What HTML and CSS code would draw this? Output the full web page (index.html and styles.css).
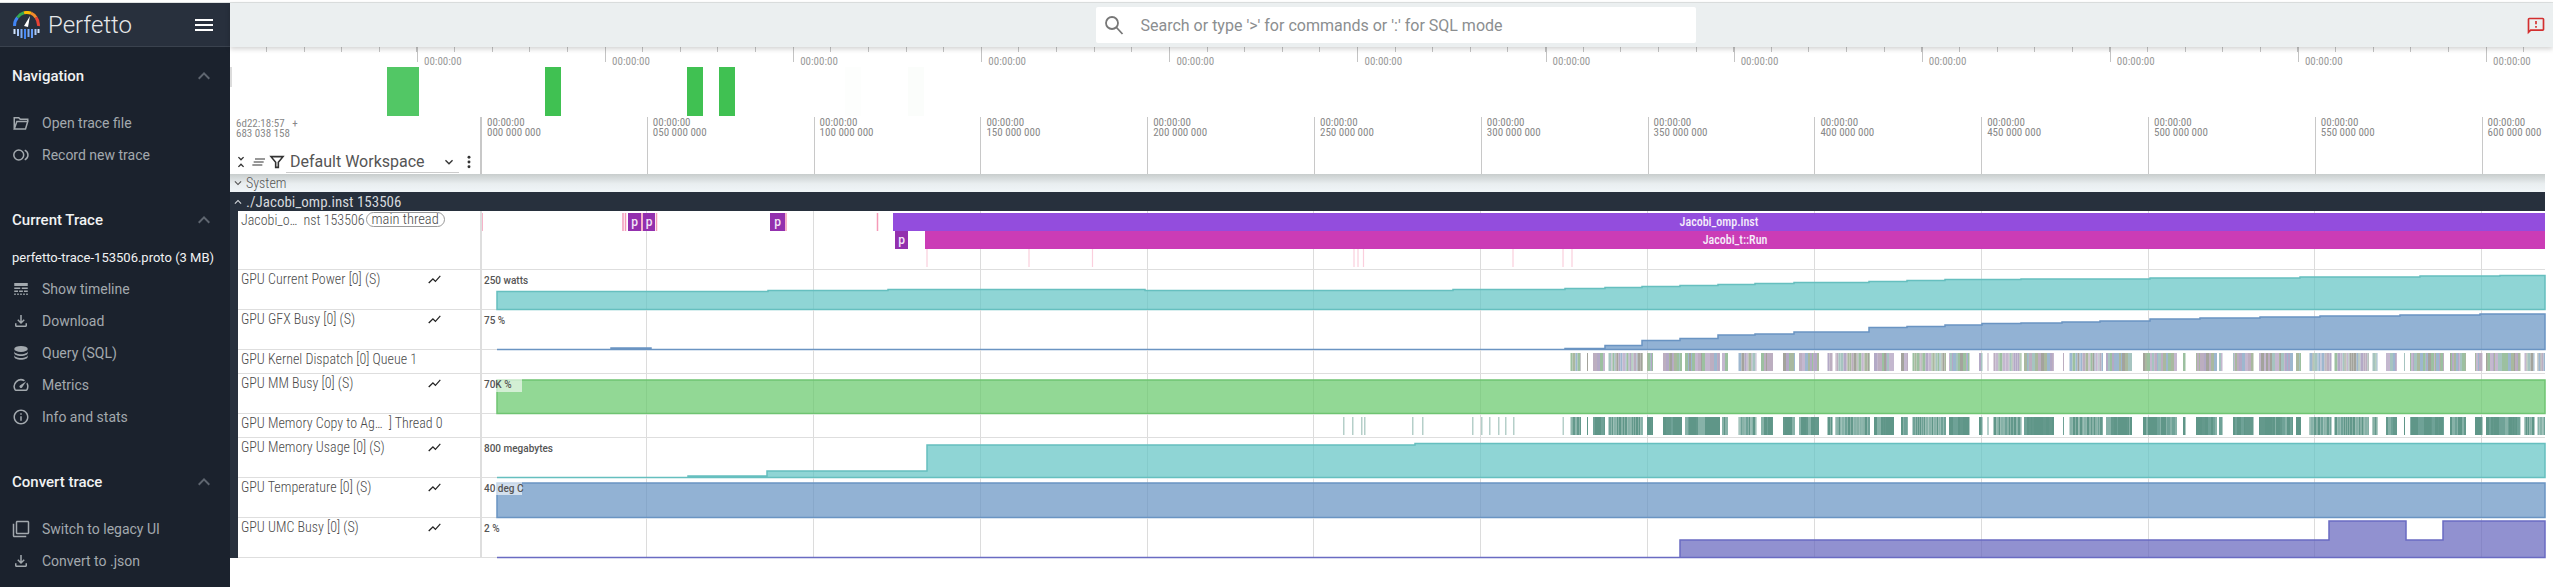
FILE: index.html
```html
<!DOCTYPE html>
<html>
<head>
    <meta charset="utf-8" />
    <title>Perfetto</title>
    <link rel="stylesheet" href="styles.css">
</head>
<body>
    <svg class="Defs">
        <symbol id="i-chart" viewBox="0 0 24 24"><path d="M3.5 18.49l6-6.01 4 4L22 6.92l-1.41-1.41-7.09 7.97-4-4L2 16.99z" /></symbol>
        <symbol id="i-up" viewBox="0 0 24 24"><path d="M12 8l-6 6 1.41 1.41L12 10.83l4.59 4.58L18 14z" /></symbol>
        <symbol id="i-down" viewBox="0 0 24 24"><path d="M16.59 8.59L12 13.17 7.41 8.59 6 10l6 6 6-6z" /></symbol>
        <symbol id="i-save" viewBox="0 0 24 24"><path d="M18 15v3H6v-3H4v3c0 1.1.9 2 2 2h12c1.1 0 2-.9 2-2v-3h-2zm-1-4l-1.41-1.41L13 12.17V4h-2v8.17L8.41 9.59 7 11l5 5 5-5z" /></symbol>
    </svg>
    <div class="Strip"></div>
    <div class="App">
        <nav class="Sidebar">
            <div class="Brand">
                <svg class="Logo" viewBox="0 0 27 28">
                    <g fill="none" stroke-width="3">
                        <path d="M1.6 15A12 12 0 0 1 4.5 6.5" stroke="#4285f4" />
                        <path d="M4.5 6.5A12 12 0 0 1 11 1.8" stroke="#34a853" />
                        <path d="M11 1.8A12 12 0 0 1 18 2.2" stroke="#fbbc04" />
                        <path d="M18 2.2A12 12 0 0 1 23 6.5" stroke="#f28b2c" />
                        <path d="M23 6.5A12 12 0 0 1 25.4 15" stroke="#ea4335" />
                    </g>
                    <path d="M11 15l6-10-2 11z" fill="#fff" />
                    <g fill="#4285f4">
                        <rect x="0.5" y="18" width="2" height="5" fill="#d2e3fc" />
                        <rect x="4" y="18" width="2" height="7" fill="#a8c7fa" />
                        <rect x="7.5" y="18" width="2" height="9" fill="#7baaf7" />
                        <rect x="11" y="18" width="2" height="10" />
                        <rect x="14.5" y="18" width="2" height="8" fill="#7baaf7" />
                        <rect x="18" y="18" width="2" height="9" fill="#669df6" />
                        <rect x="21.5" y="18" width="2" height="6" fill="#a8c7fa" />
                        <rect x="24.5" y="18" width="2" height="4" fill="#d2e3fc" />
                    </g>
                </svg>
                <span class="BrandName">Perfetto</span>
                <div class="Burger"><i></i><i></i><i></i></div>
            </div>

            <section class="NavSection">
                <h2 class="NavTitle">Navigation <svg class="NavChevron"><use href="#i-up" /></svg></h2>
                <ul class="NavList">
                    <li class="NavItem">
                        <svg class="NavIcon NavIconLine" viewBox="0 0 24 24" stroke-width="2"><path d="M3 20V5h6l2 2h10v3M3 20h15l3-10H6.5z" /></svg>
                        Open trace file
                    </li>
                    <li class="NavItem">
                        <svg class="NavIcon NavIconLine" viewBox="0 0 24 24" stroke-width="2"><circle cx="9" cy="12" r="6.6" /><path d="M17 5.5c2.5 1.2 4.3 3.6 4.3 6.5s-1.8 5.300-4.300 6.500" /></svg>
                        Record new trace
                    </li>
                </ul>
            </section>

            <section class="NavSection">
                <h2 class="NavTitle">Current Trace <svg class="NavChevron"><use href="#i-up" /></svg></h2>
                <ul class="NavList NavListTight">
                    <li class="NavItem TraceName">perfetto-trace-153506.proto (3 MB)</li>
                    <li class="NavItem">
                        <svg class="NavIcon" viewBox="0 0 24 24"><path d="M3 16h5v-2H3v2zm6.500 0h5v-2h-5v2zm6.500 0h5v-2h-5v2zM3 20h2v-2H3v2zm4 0h2v-2H7v2zm4 0h2v-2h-2v2zm4 0h2v-2h-2v2zm4 0h2v-2h-2v2zM3 12h8v-2H3v2zm10 0h8v-2h-8v2zM3 4v4h18V4H3z" /></svg>
                        Show timeline
                    </li>
                    <li class="NavItem"><svg class="NavIcon"><use href="#i-save" /></svg>Download</li>
                    <li class="NavItem">
                        <svg class="NavIcon" viewBox="0 0 24 24"><ellipse cx="12" cy="6.500" rx="9" ry="4" /><path d="M3 9.500c0 2.200 4 4 9 4s9-1.800 9-4V12c0 2.200-4 4-9 4s-9-1.800-9-4zM3 14.500c0 2.200 4 4 9 4s9-1.800 9-4V17c0 2.200-4 4-9 4s-9-1.800-9-4z" /></svg>
                        Query (SQL)
                    </li>
                    <li class="NavItem">
                        <svg class="NavIcon" viewBox="0 0 24 24"><path d="M20.380 8.570l-1.230 1.850a8 8 0 0 1-.22 7.580H5.070A8 8 0 0 1 15.580 6.850l1.850-1.230A10 10 0 0 0 3.350 19a2 2 0 0 0 1.720 1h13.850a2 2 0 0 0 1.740-1 10 10 0 0 0-.27-10.440zm-9.790 6.840a2 2 0 0 0 2.830 0l5.660-8.490-8.490 5.660a2 2 0 0 0 0 2.830z" /></svg>
                        Metrics
                    </li>
                    <li class="NavItem">
                        <svg class="NavIcon" viewBox="0 0 24 24"><path d="M11 7h2v2h-2zm0 4h2v6h-2zm1-9C6.480 2 2 6.480 2 12s4.480 10 10 10 10-4.480 10-10S17.520 2 12 2zm0 18c-4.410 0-8-3.590-8-8s3.590-8 8-8 8 3.590 8 8-3.590 8-8 8z" /></svg>
                        Info and stats
                    </li>
                </ul>
            </section>

            <section class="NavSection">
                <h2 class="NavTitle">Convert trace <svg class="NavChevron"><use href="#i-up" /></svg></h2>
                <ul class="NavList">
                    <li class="NavItem">
                        <svg class="NavIcon" viewBox="0 0 24 24"><path d="M3 5H1v16c0 1.100.9 2 2 2h16v-2H3V5zm18-4H7c-1.100 0-2 .9-2 2v14c0 1.100.9 2 2 2h14c1.100 0 2-.9 2-2V3c0-1.100-.9-2-2-2zm0 16H7V3h14v14z" /></svg>
                        Switch to legacy UI
                    </li>
                    <li class="NavItem"><svg class="NavIcon"><use href="#i-save" /></svg>Convert to .json</li>
                </ul>
            </section>
        </nav>

        <main class="Main">
            <header class="Topbar">
                <div class="Search">
                    <svg class="SearchIcon" viewBox="0 0 20 20" fill="none" stroke="#777" stroke-width="1.800"><circle cx="8" cy="8" r="6" /><path d="M12.500 12.500l6 6.500" /></svg>
                    <span class="SearchText">Search or type '&gt;' for commands or ':' for SQL mode</span>
                </div>
                <svg class="Feedback" viewBox="0 0 24 24"><path d="M20 2H4c-1.100 0-2 .9-2 2v18l4-4h14c1.100 0 2-.9 2-2V4c0-1.100-.9-2-2-2zm0 14H5.170L4 17.170V4h16v12zM11 12h2v2h-2zm0-6h2v4h-2z" /></svg>
            </header>

            <div class="Overview">
                <div class="Ruler">
                    <span class="RulerMark">00:00:00</span><span class="RulerMark">00:00:00</span><span class="RulerMark">00:00:00</span><span class="RulerMark">00:00:00</span><span class="RulerMark">00:00:00</span><span class="RulerMark">00:00:00</span><span class="RulerMark">00:00:00</span><span class="RulerMark">00:00:00</span><span class="RulerMark">00:00:00</span><span class="RulerMark">00:00:00</span><span class="RulerMark">00:00:00</span><span class="RulerMark">00:00:00</span>
                </div>
                <svg class="OverviewLane" viewBox="230 62 2323 55">
                    <rect x="230" y="67" width="2" height="20" fill="#dcdcdc" />
                    <rect x="387" y="67" width="32" height="49" fill="#52c765" />
                    <rect x="545" y="67" width="16" height="49" fill="#40c152" />
                    <rect x="687" y="67" width="16" height="49" fill="#40c152" />
                    <rect x="719" y="67" width="16" height="49" fill="#40c152" />
                    <rect x="845" y="67" width="16" height="49" fill="#fdfefd" />
                    <rect x="908" y="67" width="16" height="49" fill="#fbfdfb" />
                </svg>
            </div>

            <div class="TimeHeader">
                <div class="HeaderLeft">
                    <div class="Offset">6d22:18:57   +<br>683 038 158</div>
                    <div class="Tools">
                        <svg class="Tool ToolNarrow" viewBox="0 0 24 24"><path d="M7.410 18.590L8.830 20 12 16.830 15.170 20l1.410-1.410L12 14l-4.590 4.590zm9.180-13.180L15.170 4 12 7.170 8.830 4 7.410 5.410 12 10l4.590-4.590z" /></svg>
                        <svg class="Tool ToolLine" viewBox="0 0 24 24" stroke-width="1.800"><path d="M6 7.500h15M4 12h15M2 16.500h15" /></svg>
                        <svg class="Tool ToolLine" viewBox="0 0 24 24" stroke-width="2.400"><path d="M3 4h18l-7 8.500V20h-4v-7.500z" /></svg>
                        <div class="Workspace">
                            <span class="WorkspaceName">Default Workspace</span>
                            <svg class="Tool"><use href="#i-down" /></svg>
                        </div>
                        <svg class="Tool ToolMore" viewBox="0 0 24 24"><circle cx="12" cy="5" r="2.200" /><circle cx="12" cy="12" r="2.200" /><circle cx="12" cy="19" r="2.200" /></svg>
                    </div>
                </div>
                <div class="Scale">
                    <div class="ScaleMark">00:00:00<br>000 000 000</div>
                    <div class="ScaleMark">00:00:00<br>050 000 000</div>
                    <div class="ScaleMark">00:00:00<br>100 000 000</div>
                    <div class="ScaleMark">00:00:00<br>150 000 000</div>
                    <div class="ScaleMark">00:00:00<br>200 000 000</div>
                    <div class="ScaleMark">00:00:00<br>250 000 000</div>
                    <div class="ScaleMark">00:00:00<br>300 000 000</div>
                    <div class="ScaleMark">00:00:00<br>350 000 000</div>
                    <div class="ScaleMark">00:00:00<br>400 000 000</div>
                    <div class="ScaleMark">00:00:00<br>450 000 000</div>
                    <div class="ScaleMark">00:00:00<br>500 000 000</div>
                    <div class="ScaleMark">00:00:00<br>550 000 000</div>
                    <div class="ScaleMark">00:00:00<br>600 000 000</div>
                </div>
            </div>

            <div class="Tracks">
                <div class="GroupSystem">
                    <svg class="GroupChevron"><use href="#i-down" /></svg>System
                </div>
                <div class="GroupOpen">
                    <svg class="GroupChevron"><use href="#i-up" /></svg>./Jacobi_omp.inst 153506
                </div>
                <div class="GroupBody">
                    <div class="Row RowThread">
                        <div class="Shell"><span class="Title">Jacobi_o…</span><span class="Title TitleTail">nst 153506</span><span class="Pill">main thread</span></div>
                        <div class="Content">
                            <svg class="Chart" viewBox="482 211 2063 58">
                                <rect x="893" y="213" width="1652" height="18" fill="#934ddd" />
                                <rect x="925" y="231" width="1620" height="18" fill="#cb3cb6" />
                                <rect x="628" y="213" width="13" height="18" fill="#9330ae" />
                                <rect x="643" y="213" width="12" height="18" fill="#9330ae" />
                                <rect x="770" y="213" width="15" height="18" fill="#9330ae" />
                                <rect x="895" y="231" width="13" height="18" fill="#9330ae" />
                                <path class="PinkMark" d="M482 213v18M623 213v18M625.500 213v18M642 213v18M656.500 213v18M786 213v18M877.500 213v18" />
                                <path class="PaleMark" d="M927 249v18M1029 249v18M1092.500 249v18M1354 249v18M1358 249v18M1363.500 249v18M1513 249v18M1563 249v18M1572 249v18" />
                                <text class="SliceP" x="634.500" y="226">p</text>
                                <text class="SliceP" x="649" y="226">p</text>
                                <text class="SliceP" x="777.500" y="226">p</text>
                                <text class="SliceP" x="901.500" y="244">p</text>
                                <text class="SliceName" x="1719" y="226">Jacobi_omp.inst</text>
                                <text class="SliceName" x="1735" y="244">Jacobi_t::Run</text>
                            </svg>
                        </div>
                    </div>

                    <div class="Row">
                        <div class="Shell"><span class="Title">GPU Current Power [0] (S)</span><svg class="ChartIcon"><use href="#i-chart" /></svg></div>
                        <div class="Content">
                            <svg class="Chart" viewBox="482 270 2063 39">
                                <path class="Area Teal" d="M497 309.500V291.500H768V290.500H888V289.500H1145V290.500H1453V289.500H1565V288.500H1605V287.500H1642V286.500H1680V285.500H1718V284.500H1755V283.500H1794V282.500H1869V281.500H1907V280.500H1945V279.500H2021V279H2150V278H2300V277H2420V276H2500V275.500H2545V309.500z" />
                                <text class="Unit" x="484" y="284">250 watts</text>
                            </svg>
                        </div>
                    </div>

                    <div class="Row">
                        <div class="Shell"><span class="Title">GPU GFX Busy [0] (S)</span><svg class="ChartIcon"><use href="#i-chart" /></svg></div>
                        <div class="Content">
                            <svg class="Chart" viewBox="482 310 2063 39">
                                <path class="Area Blue" d="M497 349.500V349.500H611V348H651V349.500H1565V348.500H1605V345.500H1642V340.500H1680V338.500H1718V335H1755V334H1794V332H1869V327.500H1907V326.500H1945V325H1982V323.500H2021V323H2062V322H2100V321H2150V319H2200V318H2260V317H2320V316H2400V315H2480V314H2545V349.500z" />
                                <text class="Unit" x="484" y="324">75 %</text>
                            </svg>
                        </div>
                    </div>

                    <div class="Row RowSlim">
                        <div class="Shell"><span class="Title">GPU Kernel Dispatch [0] Queue 1</span></div>
                        <div class="Content"><svg class="Chart" id="kernel" viewBox="482 350 2063 23"></svg></div>
                    </div>

                    <div class="Row">
                        <div class="Shell"><span class="Title">GPU MM Busy [0] (S)</span><svg class="ChartIcon"><use href="#i-chart" /></svg></div>
                        <div class="Content">
                            <svg class="Chart" viewBox="482 374 2063 39">
                                <path class="Area Green" d="M497 413.500V380H2545V413.500z" />
                                <rect class="UnitMask" x="480" y="379" width="42" height="13" />
                                <text class="Unit" x="484" y="388">70K %</text>
                            </svg>
                        </div>
                    </div>

                    <div class="Row RowSlim">
                        <div class="Shell"><span class="Title">GPU Memory Copy to Ag…</span><span class="Title TitleTail">] Thread 0</span></div>
                        <div class="Content"><svg class="Chart" id="copy" viewBox="482 414 2063 23"></svg></div>
                    </div>

                    <div class="Row">
                        <div class="Shell"><span class="Title">GPU Memory Usage [0] (S)</span><svg class="ChartIcon"><use href="#i-chart" /></svg></div>
                        <div class="Content">
                            <svg class="Chart" viewBox="482 438 2063 39">
                                <path class="Area Teal" d="M497 477.500H688V476H767V471H927V445H1415V443.500H2545V477.500z" />
                                <text class="Unit" x="484" y="452">800 megabytes</text>
                            </svg>
                        </div>
                    </div>

                    <div class="Row">
                        <div class="Shell"><span class="Title">GPU Temperature [0] (S)</span><svg class="ChartIcon"><use href="#i-chart" /></svg></div>
                        <div class="Content">
                            <svg class="Chart" viewBox="482 478 2063 39">
                                <path class="Area Blue" d="M497 517.500V483H2545V517.500z" />
                                <rect class="UnitMask" x="480" y="482" width="42" height="13" />
                                <text class="Unit" x="484" y="492">40 deg C</text>
                            </svg>
                        </div>
                    </div>

                    <div class="Row">
                        <div class="Shell"><span class="Title">GPU UMC Busy [0] (S)</span><svg class="ChartIcon"><use href="#i-chart" /></svg></div>
                        <div class="Content">
                            <svg class="Chart" viewBox="482 518 2063 39">
                                <path class="Area Violet" d="M497 557.500H1680V540H2329V521H2406V540H2443V521H2545V557.500z" />
                                <text class="Unit" x="484" y="532">2 %</text>
                            </svg>
                        </div>
                    </div>
                </div>
            </div>
        </main>
    </div>
    <script src="script.js"></script>
</body>
</html>
```

FILE: styles.css
```css
* {
    box-sizing: border-box;
}
html, body {
    margin: 0;
    height: 100%;
    overflow: hidden;
    background-color: white;
    font-family: Roboto, "Liberation Sans", sans-serif;
}
.Defs {
    display: none;
}
.Strip {
    height: 3px;
    border-bottom: 1px solid #e0e3e3;
}
.App {
    display: grid;
    grid-template-columns: 230px minmax(0, 1fr);
    height: 584px;
}

/* sidebar */
.Sidebar {
    background-color: #1b222d;
    color: #a3a9ae;
}
.Brand {
    display: flex;
    align-items: center;
    height: 44px;
    padding: 0 17px 0 13px;
    background-color: #28303d;
    border-bottom: 1px solid #3a424e;
}
.Logo {
    width: 27px;
    height: 28px;
}
.BrandName {
    flex: 1;
    margin-left: 8px;
    font-size: 24px;
    font-weight: 300;
    color: #e6e8ea;
}
.Burger i {
    display: block;
    width: 18px;
    height: 2px;
    margin: 3px 0;
    background-color: white;
}
.NavSection {
    margin-top: 35px;
}
.NavSection:first-of-type {
    margin-top: 15px;
}
.NavTitle {
    display: flex;
    align-items: center;
    justify-content: space-between;
    height: 30px;
    margin: 0;
    padding: 0 14px 2px 12px;
    font-size: 15px;
    font-weight: 500;
    color: #f1f2f3;
}
.NavChevron {
    width: 24px;
    height: 24px;
    fill: #5f6670;
}
.NavList {
    list-style: none;
    margin: 0;
    padding: 15px 0 0;
}
.NavListTight {
    padding-top: 5px;
}
.NavItem {
    display: flex;
    align-items: center;
    gap: 12px;
    height: 32px;
    padding-left: 12px;
    font-size: 14px;
}
.NavIcon {
    width: 18px;
    height: 18px;
    fill: currentColor;
    flex: none;
}
.NavIconLine {
    fill: none;
    stroke: currentColor;
}
.TraceName {
    font-size: 13px;
    color: #f1f2f3;
}

/* top bar */
.Main {
    display: flex;
    flex-direction: column;
    min-width: 0;
}
.Topbar {
    position: relative;
    z-index: 2;
    display: flex;
    align-items: center;
    justify-content: center;
    height: 44px;
    padding-left: 8px;
    background-color: #ebeff0;
    box-shadow: 0 2px 5px rgba(0, 0, 0, .18);
}
.Search {
    display: flex;
    align-items: center;
    width: 600px;
    height: 36px;
    padding-left: 8px;
    background-color: white;
    border-radius: 2px;
}
.SearchIcon {
    width: 20px;
    height: 20px;
}
.SearchText {
    margin-left: 17px;
    font-size: 16px;
    color: #8b8e90;
}
.Feedback {
    position: absolute;
    right: 7px;
    top: 13px;
    width: 20px;
    height: 20px;
    fill: #d32f2f;
}

/* overview */
.Overview {
    height: 70px;
}
.Ruler {
    display: flex;
    height: 15px;
    padding-left: 187px;
    background: repeating-linear-gradient(90deg, transparent 0 36.62px, #c4c4c4 36.62px 37.62px) -0.62px 0 / 100% 5px no-repeat;
}
.RulerMark {
    flex: none;
    width: 188.1px;
    padding: 9px 0 0 6px;
    border-left: 1px solid #c4c4c4;
    font-size: 11px;
    line-height: 12px;
    color: #999;
    font-stretch: 85%;
}
.OverviewLane {
    display: block;
    width: 100%;
    height: 55px;
}

/* time header */
.TimeHeader {
    position: relative;
    z-index: 1;
    display: flex;
    height: 57px;
    background-color: white;
}
.HeaderLeft {
    display: flex;
    flex-direction: column;
    justify-content: space-between;
    flex: none;
    width: 250px;
    padding: 1px 0 1px 6px;
}
.Offset {
    font-size: 11px;
    line-height: 10px;
    padding-top: 1px;
    color: #888;
    white-space: pre;
    font-stretch: 85%;
}
.Tools {
    display: flex;
    align-items: center;
    gap: 2px;
    height: 22px;
}
.Tool {
    flex: none;
    width: 16px;
    height: 16px;
    fill: #333;
}
.ToolLine {
    fill: none;
    stroke: #333;
}
.ToolNarrow {
    margin-left: -3px;
}
.ToolMore {
    margin-left: 0;
}
.Workspace {
    display: flex;
    align-items: center;
    justify-content: space-between;
    width: 173px;
    height: 22px;
    margin-left: -1px;
    padding: 0 2px 0 4px;
    border-bottom: 1px solid #ccc;
}
.WorkspaceName {
    font-size: 16px;
    color: #555;
    font-stretch: 90%;
}
.Scale {
    display: flex;
    flex: 1;
}
.ScaleMark {
    flex: none;
    width: 166.8px;
    padding: 1px 0 0 5px;
    border-left: 1px solid #c8c8c8;
    font-size: 11px;
    line-height: 10px;
    color: #888;
    font-stretch: 85%;
}
.ScaleMark:first-child {
    border-left: 2px solid #c8c8c8;
}

/* tracks */
.Tracks {
    margin-right: 8px;
}
.GroupSystem {
    display: flex;
    align-items: center;
    height: 18px;
    font-size: 14px;
    font-weight: 300;
    color: #555;
    font-stretch: 87%;
    background: linear-gradient(#c8cdcd, #e9eef0 55%, #f0f5f8);
}
.GroupOpen {
    display: flex;
    align-items: center;
    height: 19px;
    font-size: 15px;
    color: #d5d8dc;
    font-stretch: 87%;
    background-color: #27303d;
}
.GroupChevron {
    width: 14px;
    height: 14px;
    margin: 0 1px 0 1px;
    fill: currentColor;
}
.GroupBody {
    border-left: 8px solid #27303d;
}
.Row {
    display: flex;
    height: 40px;
    border-bottom: 1px solid #dedede;
}
.RowThread {
    height: 59px;
}
.RowSlim {
    height: 24px;
}
.Shell {
    position: relative;
    display: flex;
    flex: none;
    align-items: flex-start;
    width: 244px;
    padding-left: 3px;
    border-right: 2px solid #dedede;
}
.Title {
    font-size: 14px;
    font-weight: 300;
    line-height: 18px;
    color: #4a4a4a;
    white-space: nowrap;
    font-stretch: 87%;
}
.TitleTail {
    margin-left: 6px;
}
.Pill {
    margin: 1px 0 0 1px;
    padding: 0 5px;
    border: 1px solid #999;
    border-radius: 8px;
    font-size: 14.5px;
    font-weight: 300;
    line-height: 13px;
    color: #4a4a4a;
    font-stretch: 87%;
}
.ChartIcon {
    position: absolute;
    right: 38px;
    top: 2px;
    width: 15px;
    height: 15px;
    fill: #222;
}
.Content {
    flex: 1;
    min-width: 0;
    background-image: repeating-linear-gradient(90deg, transparent 0 164.3px, #dcdcdc 164.3px 165.3px, transparent 165.3px 166.8px);
}
.Chart {
    display: block;
    width: 100%;
    height: 100%;
    overflow: visible;
}
.Area {
    stroke-width: 1.5;
    fill-opacity: .7;
}
.Teal {
    fill: rgb(95, 195, 195);
    stroke: #66bfbf;
}
.Blue {
    fill: rgb(100, 146, 194);
    stroke: #6a94c2;
}
.Green {
    fill: rgb(100, 199, 104);
    stroke: #6fc472;
}
.Violet {
    fill: rgb(98, 99, 188);
    stroke: #6a6bc2;
}
.Unit {
    font-size: 10px;
    font-weight: 500;
    fill: #555;
}
.UnitMask {
    fill: rgba(255, 255, 255, .6);
}
.SliceP {
    font-size: 12px;
    font-weight: 500;
    fill: #f4e6f7;
    text-anchor: middle;
}
.SliceName {
    font-size: 12px;
    font-weight: 500;
    fill: #f6eefb;
    text-anchor: middle;
    font-stretch: 85%;
}
.PinkMark {
    stroke: #f59ab8;
    stroke-width: 1.5;
}
.PaleMark {
    stroke: #fbcfdd;
    stroke-width: 1.2;
}
```

FILE: script.js
```javascript
var thin = [1343, 1352, 1361, 1364, 1412, 1422, 1472, 1481, 1489, 1498, 1505, 1513, 1562.5];
var runs = [
    [1570.5, 1581], [1587, 1588], [1593, 1605], [1608.5, 1643], [1647, 1653], [1663, 1682], [1685, 1720],
    [1722, 1728], [1738.5, 1756.5], [1761, 1773], [1783, 1795], [1799, 1819], [1827.5, 1832.5], [1835.5, 1870],
    [1874, 1894], [1901, 1908], [1912.5, 1946], [1949, 1969.5], [1979, 1982.5], [1987.5, 1988.5], [1993.5, 2021.5],
    [2024, 2054], [2063, 2064], [2069.5, 2103], [2106, 2132], [2143, 2177], [2183, 2185.5], [2196, 2217],
    [2219, 2222.5], [2233, 2253.5], [2259, 2293], [2296, 2301], [2309.5, 2331.5], [2334.5, 2369], [2372.5, 2377.5],
    [2386, 2397], [2404, 2405], [2410, 2444], [2450, 2466], [2475, 2482.5], [2486, 2520.5], [2524.5, 2534.5], [2537.5, 2545]
];
var seed = 7;
function rnd() {
    seed = (seed * 16807) % 2147483647;
    return seed / 2147483647;
}
function addRect(svg, x, y, w, h, color) {
    var r = document.createElementNS("http://www.w3.org/2000/svg", "rect");
    r.setAttribute("x", x);
    r.setAttribute("y", y);
    r.setAttribute("width", w);
    r.setAttribute("height", h);
    r.setAttribute("fill", color);
    svg.appendChild(r);
}
function fillRuns(svg, y, h, colors) {
    runs.forEach(function (run) {
        var x = run[0];
        while (x < run[1]) {
            var w = Math.min(1 + Math.floor(rnd() * 3), run[1] - x);
            addRect(svg, x, y, w, h, colors[Math.floor(rnd() * colors.length)]);
            x += w;
        }
    });
}

var copy = document.getElementById("copy");
thin.forEach(function (x) {
    addRect(copy, x, 417, 1.5, 18, "#b5cfc9");
});
fillRuns(copy, 417, 18, ["#5f9688", "#5f9688", "#5f9688", "#64998c", "#6fa297", "#87b2a8"]);

var kernel = document.getElementById("kernel");
fillRuns(kernel, 353, 18, ["#b3a9c6", "#a9b89f", "#a3a39c", "#9db7cf", "#bcaec0", "#9cc0a0", "#c4b8cf", "#a6c4c0"]);
```
